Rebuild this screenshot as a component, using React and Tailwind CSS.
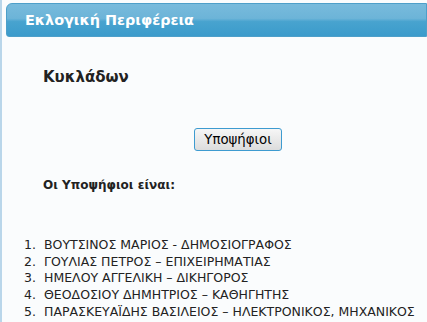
export default function App() {
  const items = [
    "ΒΟΥΤΣΙΝΟΣ ΜΑΡΙΟΣ - ΔΗΜΟΣΙΟΓΡΑΦΟΣ",
    "ΓΟΥΛΙΑΣ ΠΕΤΡΟΣ – ΕΠΙΧΕΙΡΗΜΑΤΙΑΣ",
    "ΗΜΕΛΟΥ ΑΓΓΕΛΙΚΗ – ΔΙΚΗΓΟΡΟΣ",
    "ΘΕΟΔΟΣΙΟΥ ΔΗΜΗΤΡΙΟΣ – ΚΑΘΗΓΗΤΗΣ",
    "ΠΑΡΑΣΚΕΥΑΪΔΗΣ ΒΑΣΙΛΕΙΟΣ – ΗΛΕΚΤΡΟΝΙΚΟΣ, ΜΗΧΑΝΙΚΟΣ",
  ];
  return (
    <div
      className="w-[427px] h-[322px] overflow-hidden bg-[#fafcfd] border-l-2 border-[#b9d6ea] text-[#222]"
      style={{ fontFamily: "Verdana, 'DejaVu Sans', sans-serif" }}
    >
      <div className="ml-[4px] mt-[3px] h-[34px] rounded-tl-[6px] rounded-bl-[3px] border border-[#4d9fc9] bg-[linear-gradient(to_bottom,#78bbdc_0%,#6cb4d8_45%,#48a3cf_55%,#3b9bcb_100%)] flex items-center pl-[18px]">
        <span className="text-white font-bold text-[14.4px] leading-none">Εκλογική Περιφέρεια</span>
      </div>
      <div className="pl-[41px] pt-[33px] text-[15px] font-bold leading-none text-[#222]">Κυκλάδων</div>
      <div className="flex pt-[43px] pl-[192px]">
        <button className="h-[23px] w-[88px] rounded-[3px] border border-[#3d9bd0] bg-[linear-gradient(to_bottom,#f6f6f6,#dcdcdc)] text-[13.3px] leading-none text-black">
          Υποψήφιοι
        </button>
      </div>
      <div className="pl-[41px] pt-[28px] text-[12px] font-bold leading-none">Οι Υποψήφιοι είναι:</div>
      <ol className="pt-[46px] pl-[22px] text-[12.5px] leading-[16.7px] whitespace-nowrap">
        {items.map((t, i) => (
          <li key={i} className="flex">
            <span className="w-[20px] shrink-0">{i + 1}.</span>
            <span>{t}</span>
          </li>
        ))}
      </ol>
    </div>
  );
}
